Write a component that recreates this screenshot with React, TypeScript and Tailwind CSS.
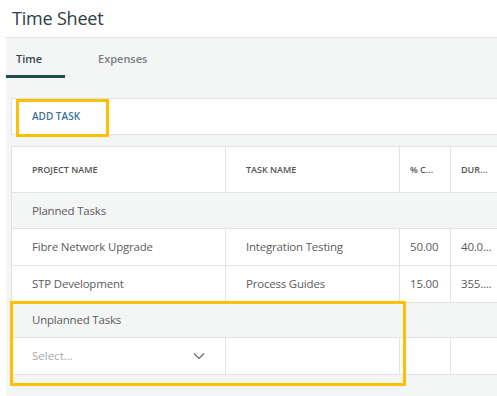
import React from "react";

const font = { fontFamily: '"Open Sans", "Noto Sans", sans-serif' };

type Row = { project: string; task: string; pct: string; dur: string };

const rows: Row[] = [
  { project: "Fibre Network Upgrade", task: "Integration Testing", pct: "50.00", dur: "40.0..." },
  { project: "STP Development", task: "Process Guides", pct: "15.00", dur: "355...." },
];

function GroupRow({ label, h }: { label: string; h: string }) {
  return (
    <div className={`flex ${h} items-center border-b border-[#e3e3e3] bg-[#f4f5f5] pl-[20px] text-[11.5px] tracking-[-0.2px] text-[#5c5c5c]`}>
      {label}
    </div>
  );
}

function DataRow({ row }: { row: Row }) {
  return (
    <div className="flex h-[37px] items-center border-b border-[#e3e3e3] text-[11.5px] tracking-[-0.2px] text-[#5c5c5c]">
      <div className="flex h-full w-[214px] items-center border-r border-[#e3e3e3] pl-[20px]">{row.project}</div>
      <div className="flex h-full w-[174px] items-center border-r border-[#e3e3e3] pl-[20px]">{row.task}</div>
      <div className="flex h-full w-[51px] items-center border-r border-[#e3e3e3] pl-[10px]">{row.pct}</div>
      <div className="flex h-full flex-1 items-center pl-[10px]">{row.dur}</div>
    </div>
  );
}

export default function App() {
  return (
    <div className="relative flex h-[396px] w-[497px] flex-col overflow-hidden bg-white" style={font}>
      <div className="flex h-[37px] items-center pl-[12px] text-[18px] tracking-[-0.2px] text-[#2d3e46]">Time Sheet</div>

      <div className="ml-[6px] flex flex-1 flex-col border-t border-[#e2e2e2] bg-[#f4f5f5]">
        {/* tabs */}
        <div className="flex h-[40px] items-stretch text-[11px]">
          <div className="flex w-[59px] items-center border-b-[3px] border-[#1e4b4c] pl-[10px] pt-[5px] font-semibold text-[#3a4449]">
            Time
          </div>
          <div className="flex items-center border-b-[3px] border-transparent pl-[33px] pt-[5px] font-semibold text-[#7a7f82]">
            Expenses
          </div>
        </div>

        {/* toolbar */}
        <div className="relative ml-[5px] mt-[20px] flex h-[37px] items-center border border-r-0 border-[#e2e2e2] bg-white pl-[20px]">
          <span className="text-[10px] font-semibold text-[#3b7396]">ADD TASK</span>
          <div className="absolute left-[4px] top-0 h-[38px] w-[93px] border-[3px] border-[#ffc000]" />
        </div>

        {/* table */}
        <div className="relative ml-[5px] mt-[11px] border-l border-t border-[#e3e3e3] bg-white">
          <div className="flex h-[46px] items-center border-b border-[#e3e3e3] text-[9px] font-semibold text-[#555]">
            <div className="flex h-full w-[214px] items-center border-r border-[#e3e3e3] pl-[20px]">PROJECT NAME</div>
            <div className="flex h-full w-[174px] items-center border-r border-[#e3e3e3] pl-[20px]">TASK NAME</div>
            <div className="flex h-full w-[51px] items-center border-r border-[#e3e3e3] pl-[10px]">% C...</div>
            <div className="flex h-full flex-1 items-center pl-[10px]">DUR...</div>
          </div>
          <GroupRow label="Planned Tasks" h="h-[36px]" />
          {rows.map((r) => (
            <DataRow key={r.project} row={r} />
          ))}
          <GroupRow label="Unplanned Tasks" h="h-[35px]" />
          <div className="flex h-[37px] items-center border-b border-[#e3e3e3] text-[11.5px]">
            <div className="flex h-full w-[214px] items-center justify-between border-r border-[#e3e3e3] pl-[20px] pr-[20px] text-[#a8a8a8]">
              <span>Select...</span>
              <svg width="12" height="8" viewBox="0 0 12 8" fill="none">
                <path d="M1 1.5 L6 6.5 L11 1.5" stroke="#666" strokeWidth="1.2" />
              </svg>
            </div>
            <div className="h-full w-[174px] border-r border-[#e3e3e3]" />
            <div className="h-full w-[51px] border-r border-[#e3e3e3]" />
            <div className="h-full flex-1" />
          </div>
          <div className="pointer-events-none absolute left-[-2px] top-[154px] h-[85px] w-[396px] border-[3px] border-[#ffc000]" />
        </div>
      </div>
    </div>
  );
}
